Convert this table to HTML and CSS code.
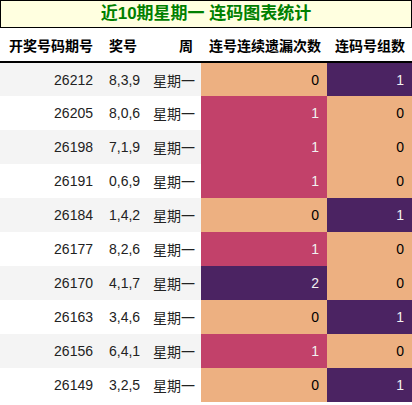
FILE: index.html
```html
<!DOCTYPE html>
<html lang="zh">
<head>
    <meta charset="UTF-8">
    <meta name="viewport" content="width=device-width, initial-scale=1.0">
    <title>近10期星期一 连码图表统计</title>
    <link rel="stylesheet" href="styles.css">
</head>
<body>
<div class="title">近10期星期一 连码图表统计</div>

<table class="stats">
    <colgroup>
        <col class="c-issue">
        <col class="c-nums">
        <col class="c-week">
        <col class="c-miss">
        <col class="c-group">
    </colgroup>
    <thead>
        <tr>
            <th>开奖号码期号</th>
            <th>奖号</th>
            <th>周</th>
            <th>连号连续遗漏次数</th>
            <th>连码号组数</th>
        </tr>
    </thead>
    <tbody>
        <tr><td>26212</td><td>8,3,9</td><td>星期一</td><td class="lv0">0</td><td class="lv2">1</td></tr>
        <tr><td>26205</td><td>8,0,6</td><td>星期一</td><td class="lv1">1</td><td class="lv0">0</td></tr>
        <tr><td>26198</td><td>7,1,9</td><td>星期一</td><td class="lv1">1</td><td class="lv0">0</td></tr>
        <tr><td>26191</td><td>0,6,9</td><td>星期一</td><td class="lv1">1</td><td class="lv0">0</td></tr>
        <tr><td>26184</td><td>1,4,2</td><td>星期一</td><td class="lv0">0</td><td class="lv2">1</td></tr>
        <tr><td>26177</td><td>8,2,6</td><td>星期一</td><td class="lv1">1</td><td class="lv0">0</td></tr>
        <tr><td>26170</td><td>4,1,7</td><td>星期一</td><td class="lv2">2</td><td class="lv0">0</td></tr>
        <tr><td>26163</td><td>3,4,6</td><td>星期一</td><td class="lv0">0</td><td class="lv2">1</td></tr>
        <tr><td>26156</td><td>6,4,1</td><td>星期一</td><td class="lv1">1</td><td class="lv0">0</td></tr>
        <tr><td>26149</td><td>3,2,5</td><td>星期一</td><td class="lv0">0</td><td class="lv2">1</td></tr>
    </tbody>
</table>
</body>
</html>
```

FILE: styles.css
```css
* {
    margin: 0;
    padding: 0;
    box-sizing: border-box;
}

body {
    font-family: "Liberation Sans", "Noto Sans CJK SC", sans-serif;
    font-size: 14px;
    color: #222;
    background: #fff;
    width: 412px;
}

.title {
    height: 28px;
    line-height: 26px;
    border: 1px solid #000;
    background: #ffffe0;
    color: #008000;
    font-size: 17px;
    font-weight: bold;
    text-align: center;
}

.stats {
    width: 412px;
    border-collapse: collapse;
    table-layout: fixed;
}

.c-issue { width: 101px; }
.c-nums { width: 44px; }
.c-week { width: 56px; }
.c-miss { width: 126px; }
.c-group { width: 85px; }

.stats th,
.stats td {
    height: 34px;
    padding: 0 8px;
    text-align: right;
    white-space: nowrap;
    vertical-align: middle;
}

.stats th {
    color: #000;
    font-weight: bold;
}

.stats thead tr {
    border-bottom: 2px solid #000;
}

.stats tbody tr:nth-child(odd) {
    background: #f4f4f4;
}

/* heat colours */
.stats td.lv0 {
    background: #edb081;
    color: #000;
}

.stats td.lv1 {
    background: #c2416a;
    color: #f1f1f1;
}

.stats td.lv2 {
    background: #4b2362;
    color: #f1f1f1;
}
```
